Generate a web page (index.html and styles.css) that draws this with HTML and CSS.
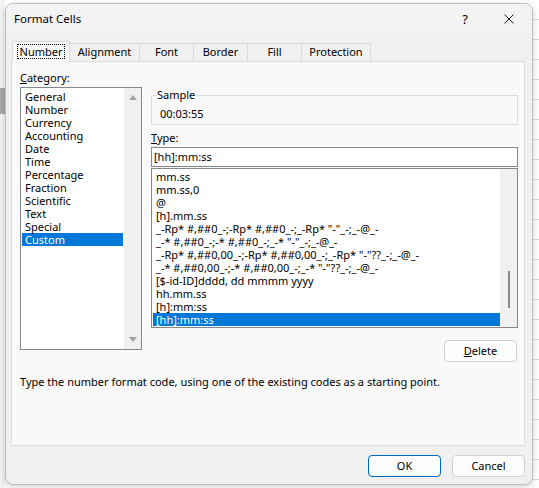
FILE: index.html
```html
<!DOCTYPE html>
<html>
<head>
<meta charset="utf-8">
<link rel="stylesheet" href="styles.css">
</head>
<body>
<div class="desk">
  <div class="sheet-left">
    <div class="hdr"></div>
  </div>
  <div class="dialog">
    <div class="titlebar">
      <span class="title">Format Cells</span>
      <span class="tb-btns">
        <span class="help">?</span>
        <svg class="close" width="10" height="10" viewBox="0 0 10 10"><path d="M0.5 0.5 L9.5 9.5 M9.5 0.5 L0.5 9.5" stroke="#1a1a1a" stroke-width="1" fill="none"/></svg>
      </span>
    </div>
    <div class="body">
      <div class="tabs">
        <div class="tab sel"><span class="focus">Number</span></div>
        <div class="tab w-align">Alignment</div>
        <div class="tab w-font">Font</div>
        <div class="tab w-border">Border</div>
        <div class="tab w-fill">Fill</div>
        <div class="tab w-prot">Protection</div>
      </div>
      <div class="panel">
        <div class="cols">
          <div class="left">
            <div class="label"><u>C</u>ategory:</div>
            <div class="catbox">
              <div class="items">
                <div class="item">General</div>
                <div class="item">Number</div>
                <div class="item">Currency</div>
                <div class="item">Accounting</div>
                <div class="item">Date</div>
                <div class="item">Time</div>
                <div class="item">Percentage</div>
                <div class="item">Fraction</div>
                <div class="item">Scientific</div>
                <div class="item">Text</div>
                <div class="item">Special</div>
                <div class="item sel">Custom</div>
              </div>
              <div class="vscroll">
                <span class="arrow up"></span>
                <span class="arrow down"></span>
              </div>
            </div>
          </div>
          <div class="right">
            <fieldset class="sample">
              <legend>Sample</legend>
              <div class="sample-val">00:03:55</div>
            </fieldset>
            <div class="label type-label"><u>T</u>ype:</div>
            <div class="typein">[hh]:mm:ss</div>
            <div class="typelist">
              <div class="items">
                <div class="item">mm.ss</div>
                <div class="item">mm.ss,0</div>
                <div class="item">@</div>
                <div class="item">[h].mm.ss</div>
                <div class="item">_-Rp* #,##0_-;-Rp* #,##0_-;_-Rp* "-"_-;_-@_-</div>
                <div class="item">_-* #,##0_-;-* #,##0_-;_-* "-"_-;_-@_-</div>
                <div class="item">_-Rp* #,##0,00_-;-Rp* #,##0,00_-;_-Rp* "-"??_-;_-@_-</div>
                <div class="item">_-* #,##0,00_-;-* #,##0,00_-;_-* "-"??_-;_-@_-</div>
                <div class="item">[$-id-ID]dddd, dd mmmm yyyy</div>
                <div class="item">hh.mm.ss</div>
                <div class="item">[h]:mm:ss</div>
                <div class="item sel">[hh]:mm:ss</div>
              </div>
              <div class="vscroll2"><span class="thumb"></span></div>
            </div>
            <div class="del-row"><button class="btn"><u>D</u>elete</button></div>
          </div>
        </div>
        <p class="desc">Type the number format code, using one of the existing codes as a starting point.</p>
      </div>
      <div class="footer">
        <button class="btn default">OK</button>
        <button class="btn">Cancel</button>
      </div>
    </div>
  </div>
</div>
</body>
</html>
```
FILE: styles.css
```css
html, body {
  margin: 0;
  padding: 0;
  width: 539px;
  height: 488px;
  overflow: hidden;
}
body {
  font-family: "Noto Sans", "Liberation Sans", sans-serif;
  font-size: 11px;
  color: #000;
  background-color: #ffffff;
  background-image: repeating-linear-gradient(to bottom, transparent 0, transparent 19px, #dadada 19px, #dadada 20px);
}
.desk {
  position: relative;
  padding: 3px 6px 3px 5px;
  height: 488px;
  box-sizing: border-box;
}
.sheet-left {
  position: absolute;
  left: 0;
  top: 0;
  width: 5px;
  height: 488px;
  background: #f3f3f3;
}
.sheet-left .hdr {
  margin-top: 88px;
  height: 26px;
  background: #a8a8a8;
}
.dialog {
  position: relative;
  width: 528px;
  height: 482px;
  box-sizing: border-box;
  border: 1px solid #bdbdbd;
  border-radius: 8px;
  overflow: hidden;
  background: #f0f0f0;
  box-shadow: 0 2px 6px rgba(0,0,0,0.18);
  display: flex;
  flex-direction: column;
}
.titlebar {
  height: 29px;
  background: #f3f3f3;
  display: flex;
  align-items: center;
  padding-left: 8px;
  flex: none;
  font-size: 11.5px;
}
.title {
  flex: 1;
  line-height: 14px;
}
.tb-btns {
  display: flex;
  align-items: center;
}
.help {
  font-size: 13px;
  width: 10px;
  text-align: center;
  margin-right: 34px;
}
.close {
  margin-right: 18px;
  display: block;
}
.body {
  flex: 1;
  padding: 8px 7px 0 5px;
  display: flex;
  flex-direction: column;
}
.tabs {
  display: flex;
  height: 20px;
  padding-left: 1px;
  position: relative;
  z-index: 1;
}
.tab {
  box-sizing: border-box;
  height: 18px;
  margin-top: 2px;
  border: 1px solid #d9d9d9;
  border-bottom: none;
  border-left: none;
  background: #f0f0f0;
  text-align: center;
  line-height: 16px;
}
.tab.sel {
  width: 58px;
  height: 21px;
  margin-top: 0;
  border-left: 1px solid #d9d9d9;
  background: #f9f9f9;
  padding-top: 2px;
}
.focus {
  display: inline-block;
  border: 1px dotted #000;
  line-height: 13px;
  padding: 0 2px;
}
.w-align { width: 70px; }
.w-font { width: 54px; }
.w-border { width: 54px; }
.w-fill { width: 54px; }
.w-prot { width: 69px; }
.panel {
  height: 385px;
  box-sizing: border-box;
  background: #f9f9f9;
  border: 1px solid #dcdcdc;
  padding: 9px 6px 0 8px;
  flex: none;
}
.cols {
  display: flex;
  gap: 9px;
}
.left {
  width: 122px;
  flex: none;
}
.right {
  width: 367px;
  flex: none;
}
.label {
  line-height: 14px;
}
.catbox {
  margin-top: 2px;
  height: 263px;
  box-sizing: border-box;
  border: 1px solid #828790;
  background: #fff;
  display: flex;
}
.items {
  flex: 1;
  padding-top: 2px;
}
.item {
  height: 13px;
  line-height: 13px;
  padding-left: 3px;
  margin: 0 1px;
  white-space: nowrap;
}
.item.sel {
  background: #0078d7;
  color: #fff;
}
.vscroll {
  width: 17px;
  background: #f0f0f0;
  display: flex;
  flex-direction: column;
  justify-content: space-between;
  align-items: center;
  padding: 7px 0 7px;
}
.arrow {
  width: 0;
  height: 0;
  border-left: 4.5px solid transparent;
  border-right: 4.5px solid transparent;
}
.arrow.up { border-bottom: 5px solid #a3a3a3; }
.arrow.down { border-top: 5px solid #a3a3a3; }
.sample {
  margin: 17px 0 0 0;
  padding: 5px 5px 1px 5px;
  border: 1px solid #dcdcdc;
  min-inline-size: 0;
}
.sample legend {
  padding: 0 1px;
  margin-left: -1px;
  line-height: 14px;
}
.sample-val {
  line-height: 14px;
  padding-left: 3px;
  height: 16px;
}
.type-label {
  margin-top: 6px;
}
.typein {
  margin-top: 2px;
  height: 20px;
  box-sizing: border-box;
  border: 1px solid #828790;
  background: #fff;
  line-height: 18px;
  padding-left: 2px;
}
.typelist {
  margin-top: 1px;
  height: 160px;
  box-sizing: border-box;
  border: 1px solid #828790;
  background: #fff;
  display: flex;
}
.typelist .items {
  padding-top: 1px;
}
.typelist .item {
  padding-left: 3px;
  margin: 0 0 0 1px;
}
.vscroll2 {
  width: 17px;
  background: #f0f0f0;
  display: flex;
  justify-content: center;
}
.thumb {
  width: 2px;
  height: 37px;
  margin-top: 102px;
  background: #8a8a8a;
}
.del-row {
  display: flex;
  justify-content: flex-end;
  margin-top: 12px;
  padding-right: 1px;
}
.btn {
  font-family: inherit;
  font-size: 11px;
  color: #000;
  width: 73px;
  height: 22px;
  box-sizing: border-box;
  border: 1px solid #d0d0d0;
  border-radius: 4px;
  background: #fdfdfd;
  padding: 0;
  line-height: 18px;
}
.btn.default {
  border: 1px solid #0067c0;
}
.desc {
  margin: 13px 0 0 0;
  line-height: 14px;
}
.footer {
  display: flex;
  justify-content: flex-end;
  gap: 11px;
  padding-top: 9px;
}
```
